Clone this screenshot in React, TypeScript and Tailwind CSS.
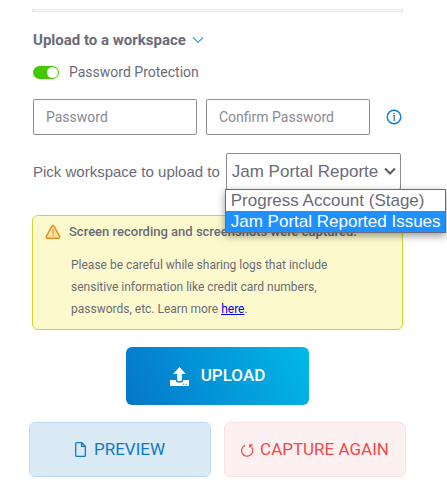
import { useState } from "react";

const workspaces = ["Progress Account (Stage)", "Jam Portal Reported Issues"];

function ChevronIcon() {
  return (
    <svg width="12" height="8" viewBox="0 0 12 8" fill="none" stroke="#3ba0db" strokeWidth="1.2" aria-hidden="true">
      <path d="M1 1.5 6 6.5 11 1.5" />
    </svg>
  );
}

function InfoIcon() {
  return (
    <svg width="16" height="16" viewBox="0 0 16 16" fill="none" stroke="#0f7cc6" aria-hidden="true">
      <circle cx="8" cy="8" r="6.8" strokeWidth="1.4" />
      <path d="M7 6.7H8.2V12" strokeWidth="1.2" />
      <circle cx="8" cy="4.5" r="0.8" fill="#0f7cc6" stroke="none" />
    </svg>
  );
}

function WarningIcon() {
  return (
    <svg width="16" height="16" viewBox="0 0 16 16" aria-hidden="true">
      <path
        d="M6.9 2.1a1.3 1.3 0 0 1 2.2 0l5.5 10.3a1.3 1.3 0 0 1-1.1 1.9h-11a1.3 1.3 0 0 1-1.1-1.9Z"
        fill="#fbe3a4"
        stroke="#ea8a1c"
        strokeWidth="1.4"
      />
      <path d="M8 5.2V9.6M8 10.8V12" stroke="#e07b10" strokeWidth="1" />
    </svg>
  );
}

function UploadIcon() {
  return (
    <svg width="19" height="19" viewBox="0 0 19 19" fill="#fff" aria-hidden="true">
      <path d="M9.5 0 15.8 7H11.8V13a1 1 0 0 1-1 1H8.2a1 1 0 0 1-1-1V7H3.2Z" />
      <path
        fillRule="evenodd"
        d="M0 13H5.8V13.6a2 2 0 0 0 2 2H11.2a2 2 0 0 0 2-2V13H19V19H0ZM13 16.8V17.8H14.2V16.8ZM15.6 16.8V17.8H16.8V16.8Z"
      />
    </svg>
  );
}

function FileIcon() {
  return (
    <svg width="11" height="15" viewBox="0 0 11 15" fill="none" stroke="#1279c4" strokeWidth="1.3" aria-hidden="true">
      <path d="M1.6.7H6.8L10.3 4.2V13.4a.9.9 0 0 1-.9.9H1.6a.9.9 0 0 1-.9-.9V1.6a.9.9 0 0 1 .9-.9Z" />
      <path d="M6.6.8V4.4H10.2" />
    </svg>
  );
}

function RetryIcon() {
  return (
    <svg width="13" height="14" viewBox="0 0 13 14" fill="none" stroke="#ee4b4b" strokeWidth="1.2" aria-hidden="true">
      <path d="M4.1 2.4A5.6 5.6 0 1 0 10.6 4.2" />
      <path d="M8 1.2 12.2 1.6 8.4 5.2Z" fill="#ee4b4b" stroke="none" />
    </svg>
  );
}

export default function App() {
  const [protectedUpload, setProtectedUpload] = useState(true);
  const [workspace, setWorkspace] = useState(workspaces[1]);
  const field =
    "h-9 min-w-0 flex-1 rounded-xs border border-[#8c8c94] bg-white px-3 text-sm text-[#6b6b78] placeholder:text-[#8a8a92] outline-none";

  return (
    <main className="bg-white pt-[9px] pr-[41px] pb-2 pl-[29px] font-['Roboto','Liberation_Sans',sans-serif] text-[#6b6b78]">
      <div className="px-[3px]">
        <hr className="h-[3px] border border-[#e5e5e5]" />

        <button type="button" className="mt-4 ml-px flex h-6 items-center gap-[6px] text-[15px] leading-6 font-bold">
          Upload to a workspace
          <ChevronIcon />
        </button>

        <label className="mt-2 ml-px flex h-6 items-center gap-[10px] text-sm">
          <input
            type="checkbox"
            checked={protectedUpload}
            onChange={(e) => setProtectedUpload(e.target.checked)}
            className="peer sr-only"
          />
          <span className="flex h-[13px] w-[26px] justify-start rounded-full bg-gray-300 p-px peer-checked:justify-end peer-checked:bg-[#43c800]">
            <span className="size-[11px] rounded-full bg-white" />
          </span>
          Password Protection
        </label>

        <div className="mt-[15px] flex items-center pl-px">
          <div className="flex min-w-0 flex-1 gap-[9px]">
            <input type="password" placeholder="Password" aria-label="Password" className={field} />
            <input type="password" placeholder="Confirm Password" aria-label="Confirm Password" className={field} />
          </div>
          <button type="button" aria-label="Password help" className="ml-4 pr-px">
            <InfoIcon />
          </button>
        </div>

        <div className="mt-[18px] flex items-center gap-[6px] pr-[2px] pl-px font-['Liberation_Sans',Arial,sans-serif]">
          <label htmlFor="workspace" className="shrink-0 text-[15px] leading-9">
            Pick workspace to upload to
          </label>
          <div className="relative min-w-0 flex-1">
            <select
              id="workspace"
              value={workspace}
              onChange={(e) => setWorkspace(e.target.value)}
              className="block h-[37px] w-full appearance-none rounded-xs border border-[#8c8c94] bg-white pr-[21px] pl-[5px] text-[17px] outline-none"
            >
              {workspaces.map((name) => (
                <option key={name}>{name}</option>
              ))}
            </select>
            <svg
              className="pointer-events-none absolute top-[14px] right-[5px]"
              width="12"
              height="9"
              viewBox="0 0 12 9"
              fill="none"
              stroke="#5b5b66"
              strokeWidth="2"
              aria-hidden="true"
            >
              <path d="M1 1.5 6 6.5 11 1.5" />
            </svg>
            <ul
              role="listbox"
              aria-label="Workspaces"
              className="absolute top-9 -left-px z-10 border border-[#6b6b78] bg-white text-[17px] whitespace-nowrap shadow-[0_3px_8px_rgba(0,0,0,0.4)]"
            >
              {workspaces.map((name) => (
                <li
                  key={name}
                  role="option"
                  aria-selected={name === workspace}
                  onClick={() => setWorkspace(name)}
                  className="pr-1 pl-[5px] leading-[21px] aria-selected:bg-[#1e90ff] aria-selected:text-white"
                >
                  {name}
                </li>
              ))}
            </ul>
          </div>
        </div>

        <section className="mt-[25px] rounded-md border border-[#d3d32f] bg-[#fcfacd] px-3 pt-[6px] pb-[9px] text-xs">
          <h2 className="flex items-center gap-2 text-[13px] leading-5 font-medium">
            <WarningIcon />
            Screen recording and screenshots were captured.
          </h2>
          <p className="mt-3 mr-12 ml-[26px] leading-[22px]">
            Please be careful while sharing logs that include sensitive information like credit card numbers, passwords,
            etc. Learn more{" "}
            <a href="#logs" className="text-[#0000ee] underline">
              here
            </a>
            .
          </p>
        </section>
      </div>

      <button
        type="button"
        className="mx-auto mt-[17px] flex h-[58px] w-[183px] items-center justify-center gap-3 rounded-md bg-linear-[65deg] from-[#0676c8] to-[#02b8e9] text-[17px] font-medium text-white"
      >
        <UploadIcon />
        UPLOAD
      </button>

      <div className="mt-[17px] grid grid-cols-2 gap-[13px] text-[17px]">
        <button
          type="button"
          className="flex h-[55px] items-center justify-center gap-2 rounded-md border border-[#b9dcf6] bg-[#d9eaf4] text-[#1279c4]"
        >
          <FileIcon />
          PREVIEW
        </button>
        <button
          type="button"
          className="flex h-[55px] items-center justify-center gap-[6px] rounded-md border border-[#fde0e0] bg-[#fdf0f0] text-[#ee4b4b]"
        >
          <RetryIcon />
          CAPTURE AGAIN
        </button>
      </div>
    </main>
  );
}
